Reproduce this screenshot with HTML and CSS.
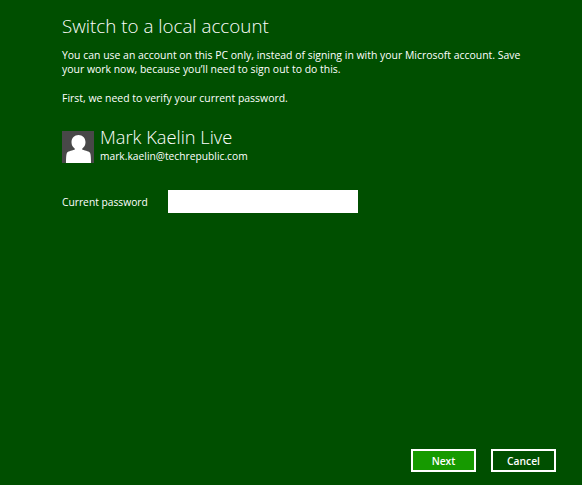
FILE: index.html
```html
<!DOCTYPE html>
<html lang="en">
<head>
<meta charset="utf-8">
<title>Switch to a local account</title>
<link rel="stylesheet" href="styles.css">
</head>
<body>
<main class="page">
  <div class="content">
    <h1 class="title">Switch to a local account</h1>
    <p class="intro">You can use an account on this PC only, instead of signing in with your Microsoft account. Save your work now, because you’ll need to sign out to do this.</p>
    <p class="verify">First, we need to verify your current password.</p>
    <div class="user">
      <svg class="avatar" viewBox="0 0 32 32" aria-hidden="true">
        <rect width="32" height="32" fill="#484848"/>
        <path fill="#fff" d="M16.5 4c-4 0-7 3-7 7.2 0 2.8 1.3 5 3.2 6.2v1.4c-3.6.8-7.2 1.8-7.9 3.4-.6 1.4-.8 5.4-.8 9.8h25c0-4.4-.2-8.4-.8-9.8-.7-1.6-4.3-2.6-7.9-3.4v-1.4c1.9-1.2 3.2-3.4 3.2-6.2 0-4.2-3-7.2-7-7.2z"/>
      </svg>
      <div class="user-text">
        <div class="user-name">Mark Kaelin Live</div>
        <div class="user-email">mark.kaelin@techrepublic.com</div>
      </div>
    </div>
    <div class="field">
      <label class="field-label" for="pw">Current password</label>
      <input class="field-input" id="pw" type="password">
    </div>
  </div>
  <div class="actions">
    <button class="btn btn-primary" type="button">Next</button>
    <button class="btn" type="button">Cancel</button>
  </div>
</main>
</body>
</html>
```
FILE: styles.css
```css
* { box-sizing: border-box; }
html, body { height: 100%; }
body {
  margin: 0;
  background: #004f00;
  color: #fff;
  font-family: "Open Sans", "Liberation Sans", sans-serif;
  overflow: hidden;
}
.page {
  height: 485px;
  display: flex;
  flex-direction: column;
  justify-content: space-between;
  padding: 13px 26px 13px 62px;
}
.title {
  margin: 0;
  font-size: 18.8px;
  font-weight: 300;
  line-height: 26px;
}
.intro, .verify {
  margin: 0;
  font-size: 10.45px;
  line-height: 14.5px;
}
.intro { margin-top: 8.5px; max-width: 470px; }
.verify { margin-top: 14.5px; }
.user {
  display: flex;
  gap: 6px;
  margin-top: 25.5px;
}
.avatar { width: 32px; height: 32px; display: block; }
.user-text { margin-top: -6px; }
.user-name {
  font-size: 18.3px;
  font-weight: 300;
  line-height: 24px;
}
.user-email {
  font-size: 10.25px;
  line-height: 14px;
}
.field {
  display: flex;
  align-items: center;
  margin-top: 27px;
}
.field-label {
  width: 106px;
  font-size: 10.25px;
}
.field-input {
  width: 190px;
  height: 23px;
  border: 0;
  background: #fff;
  padding: 0;
}
.actions {
  display: flex;
  justify-content: flex-end;
  gap: 15px;
}
.btn {
  width: 65px;
  height: 23px;
  border: 2px solid #fff;
  background: #004f00;
  color: #fff;
  font-family: inherit;
  font-size: 10.3px;
  font-weight: 600;
  padding: 0;
}
.btn-primary { background: #169a00; }
```
